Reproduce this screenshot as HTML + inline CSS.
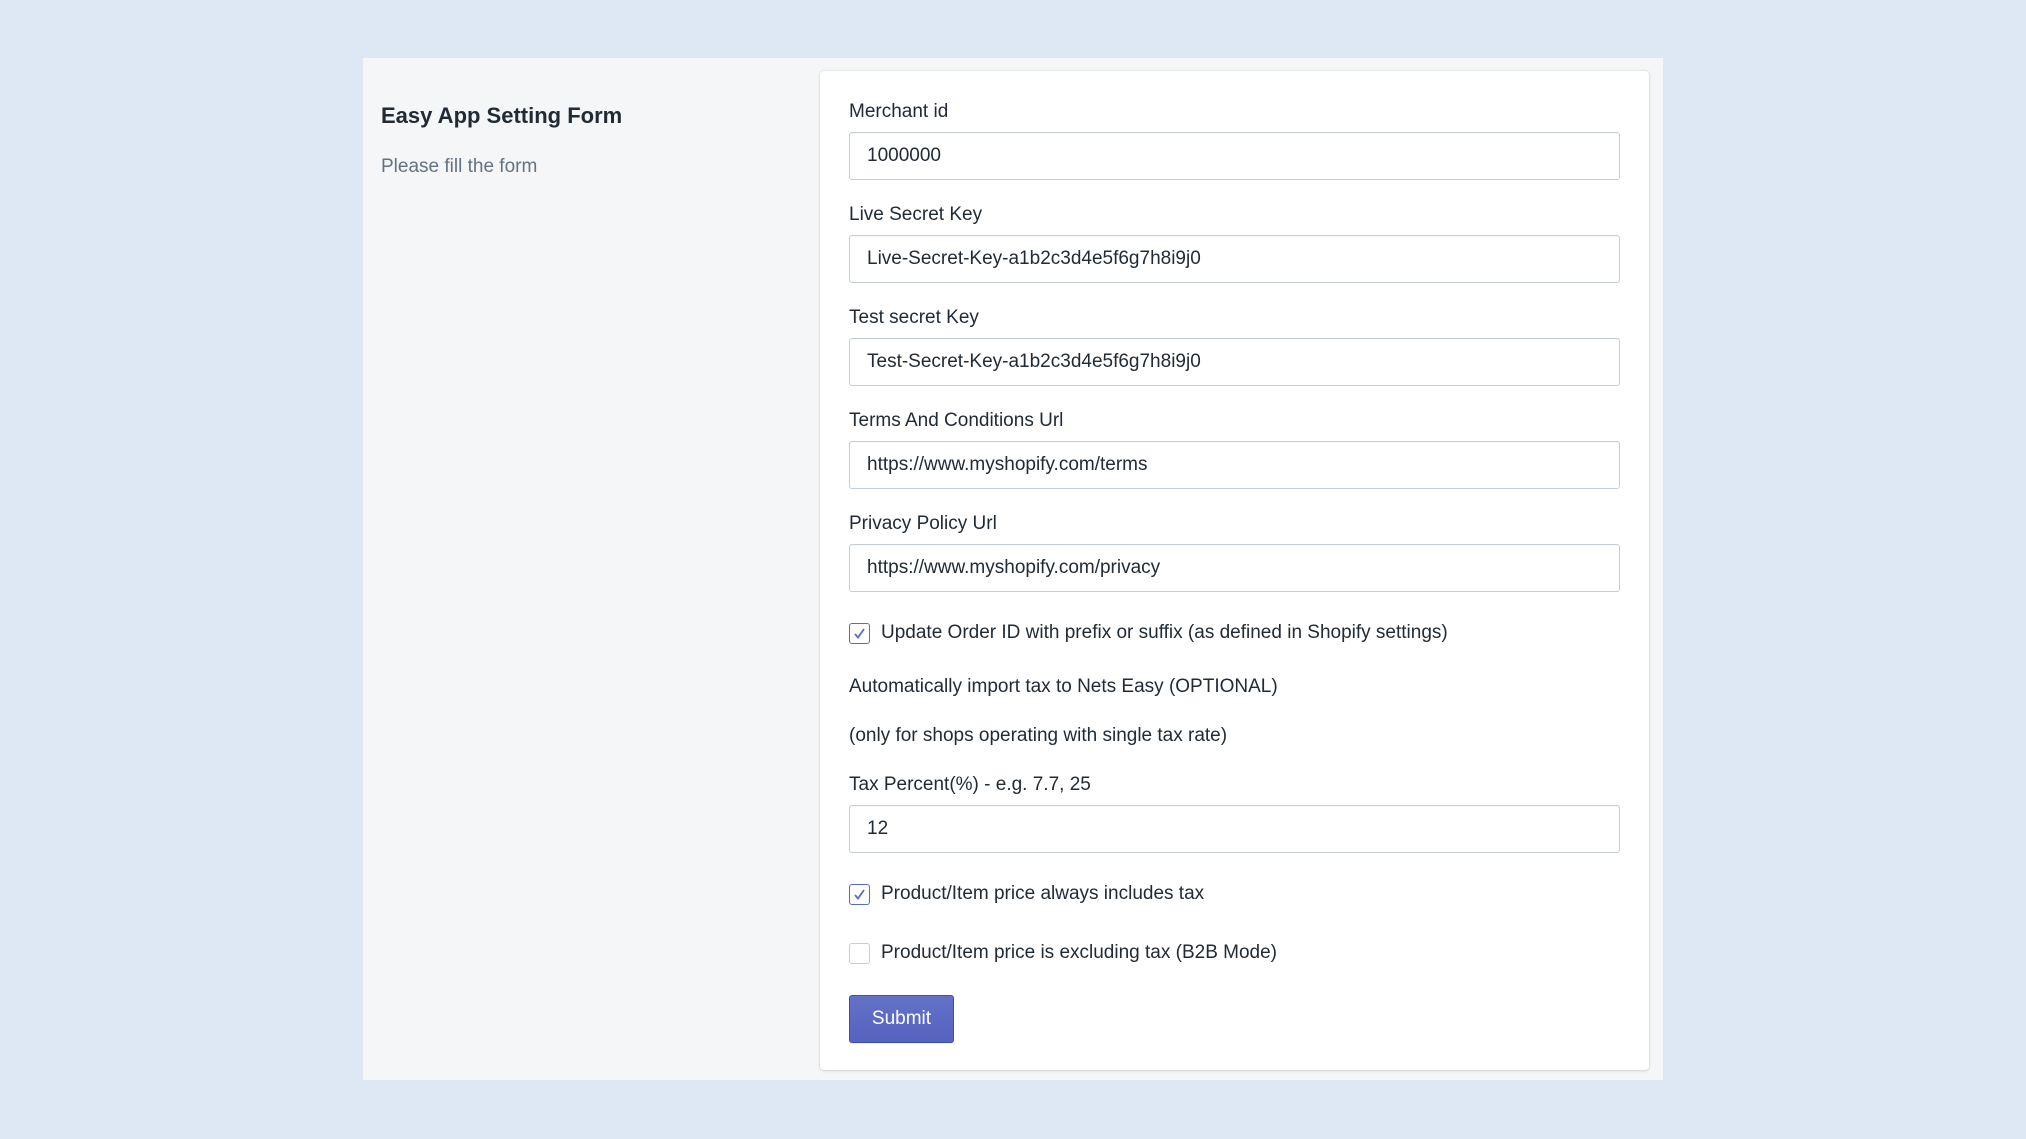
<!DOCTYPE html>
<html><head><meta charset="utf-8"><style>
*{box-sizing:border-box;margin:0;padding:0}
body{width:2026px;height:1139px;background:#dde8f4;font-family:"Liberation Sans",sans-serif;position:relative;overflow:hidden;color:#212b36}
.panel{position:absolute;left:363px;top:58px;width:1300px;height:1022px;background:#f4f6f8}
.card{position:absolute;left:820px;top:71px;width:829px;height:999px;background:#fff;border-radius:4px;box-shadow:0 0 0 1px rgba(63,63,68,.05),0 1px 3px rgba(63,63,68,.15)}
.t{position:absolute;font-size:19px;line-height:24px;white-space:nowrap}
.inp{position:absolute;left:849px;width:771px;height:48px;border:1px solid #c4cdd5;border-radius:3px;background:#fff;box-shadow:inset 0 1px 0 rgba(99,115,129,.05);font-size:19px;line-height:46px;padding-left:17px;color:#212b36}
.cb{position:absolute;left:849px;width:21px;height:21px;border:1px solid #c4cdd5;border-radius:3px;background:#fff}
.cb.on{border-color:#5c6ac4}
.cb svg{position:absolute;left:3px;top:3px}
.btn{position:absolute;left:849px;top:995px;width:105px;height:48px;background:linear-gradient(#6371c7,#5563c1);border:1px solid #3f4eae;border-radius:3px;color:#fff;font-size:19px;line-height:46px;text-align:center;box-shadow:inset 0 1px 0 0 #6774c8,0 1px 0 0 rgba(22,29,37,.05)}
</style></head><body>
<div class="panel"></div>
<div class="card"></div>
<div class="t" style="left:381px;top:102px;font-size:22px;font-weight:bold;line-height:28px">Easy App Setting Form</div>
<div class="t" style="left:381px;top:155px;color:#637381">Please fill the form</div>

<div class="t" style="left:849px;top:100px">Merchant id</div>
<div class="inp" style="top:132px">1000000</div>
<div class="t" style="left:849px;top:203px">Live Secret Key</div>
<div class="inp" style="top:235px">Live-Secret-Key-a1b2c3d4e5f6g7h8i9j0</div>
<div class="t" style="left:849px;top:306px">Test secret Key</div>
<div class="inp" style="top:338px">Test-Secret-Key-a1b2c3d4e5f6g7h8i9j0</div>
<div class="t" style="left:849px;top:409px">Terms And Conditions Url</div>
<div class="inp" style="top:441px">https://www.myshopify.com/terms</div>
<div class="t" style="left:849px;top:512px">Privacy Policy Url</div>
<div class="inp" style="top:544px">https://www.myshopify.com/privacy</div>

<div class="cb on" style="top:623px"><svg width="13" height="13" viewBox="0 0 13 13"><path d="M2 7l3 3.5L11 2" fill="none" stroke="#5c6ac4" stroke-width="1.8"/></svg></div>
<div class="t" style="left:881px;top:621px">Update Order ID with prefix or suffix (as defined in Shopify settings)</div>
<div class="t" style="left:849px;top:675px">Automatically import tax to Nets Easy (OPTIONAL)</div>
<div class="t" style="left:849px;top:724px">(only for shops operating with single tax rate)</div>
<div class="t" style="left:849px;top:773px">Tax Percent(%) - e.g. 7.7, 25</div>
<div class="inp" style="top:805px">12</div>

<div class="cb on" style="top:884px"><svg width="13" height="13" viewBox="0 0 13 13"><path d="M2 7l3 3.5L11 2" fill="none" stroke="#5c6ac4" stroke-width="1.8"/></svg></div>
<div class="t" style="left:881px;top:882px">Product/Item price always includes tax</div>
<div class="cb" style="top:943px"></div>
<div class="t" style="left:881px;top:941px">Product/Item price is excluding tax (B2B Mode)</div>

<div class="btn">Submit</div>
</body></html>
